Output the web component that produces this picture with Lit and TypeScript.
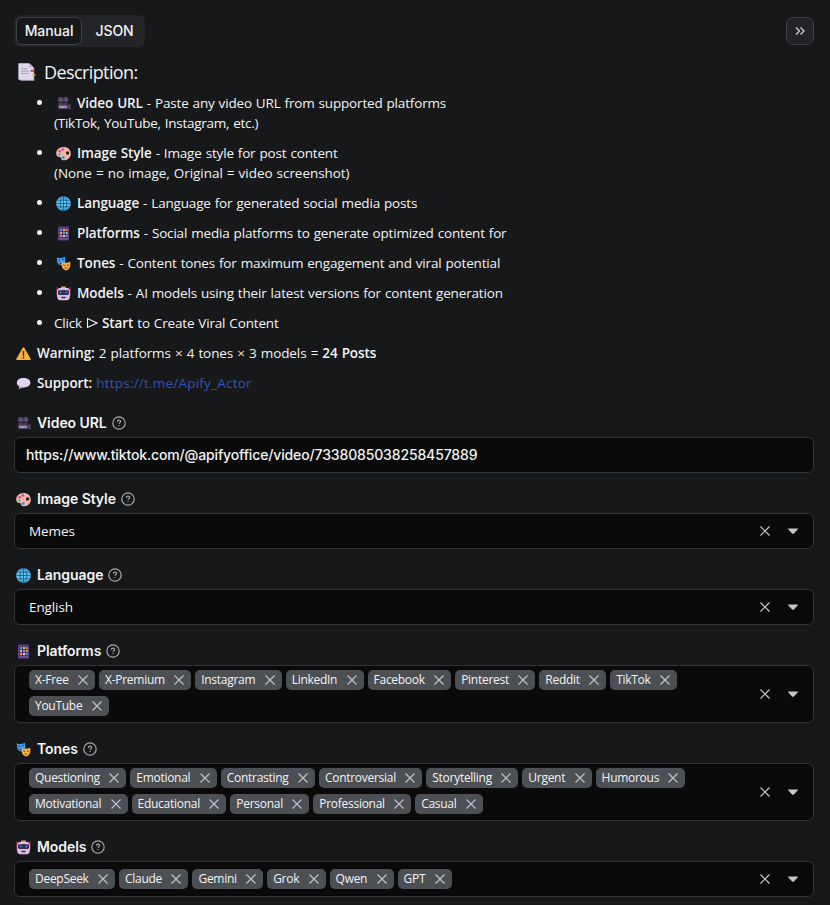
import { LitElement, html, css, svg, nothing } from "lit";
import { customElement, property } from "lit/decorators.js";

const glyphs: Record<string, unknown> = {
  camera: svg`
    <circle cx="4.6" cy="3.7" r="2.9" fill="#4b3a5c"/><circle cx="9.8" cy="3.7" r="2.9" fill="#4b3a5c"/>
    <circle cx="4.6" cy="3.7" r="1.2" fill="#75638a"/><circle cx="9.8" cy="3.7" r="1.2" fill="#75638a"/>
    <path d="M2.3 7h9v6h-9z" fill="#4b3a5c"/><path d="M11.3 9.5l3.2-2v6l-3.2-1.6z" fill="#5d4a6e"/>
    <path d="M0.8 8.6h1.8v3H.8z" fill="#352840"/><path d="M3 9.8h7.6v2.4H3z" fill="#b79fc0"/>
    <path d="M5 9.8v2.4M8.2 9.8v2.4" stroke="#6c567b" stroke-width=".6"/>`,
  palette: svg`
    <path d="M7.6 1C3.3 1 .2 3.9.2 7.4c0 2.3 1.3 3.4 3 3.5 1.4 0 1.9.6 1.9 1.5 0 1.1 1 1.9 2.6 1.9 3.9 0 7.1-2.6 7.1-6.6C14.8 3.7 11.7 1 7.6 1z" fill="#f9b49f"/>
    <circle cx="11.6" cy="7" r="1.7" fill="#2a2023"/>
    <circle cx="6.8" cy="3.4" r="1.4" fill="#c352e0"/><circle cx="3.7" cy="5.2" r="1.3" fill="#ea4567"/>
    <circle cx="3.4" cy="8.5" r="1.2" fill="#42b9a6"/><circle cx="7.2" cy="11.6" r="1.5" fill="#3e91e8"/>`,
  globe: svg`
    <circle cx="7.5" cy="7.5" r="7.1" fill="#5cc3f5"/>
    <g fill="none" stroke="#17537c" stroke-width=".8"><circle cx="7.5" cy="7.5" r="6.9" stroke="#46a9e0"/>
    <ellipse cx="7.5" cy="7.5" rx="3.3" ry="6.9"/><path d="M7.5.6v13.8M.7 7.5h13.6M1.7 4.2h11.6M1.7 10.8h11.6"/></g>`,
  phone: svg`
    <rect x="2" y=".5" width="11" height="14" rx="1" fill="#5c3f82"/>
    <rect x="3.5" y="2.5" width="8" height="9.5" fill="#4a3770"/>
    <path d="M4 3h2v2H4zM7 6h2v2H7zM9.8 9h1.7v2H9.8z" fill="#39a6ef"/>
    <path d="M7 3h2v2H7zM4 6h2v2H4zM9.8 6h1.7v2H9.8z" fill="#ffb13f"/>
    <path d="M9.8 3h1.7v2H9.8zM4 9h2v2H4z" fill="#ef8a50"/><path d="M7 9h2v2H7z" fill="#ffd06b"/>
    <path d="M3 13h9" stroke="#7c5c9f"/>`,
  masks: svg`
    <path d="M.8 1.5Q4.9 3 9 .7L9.4 5Q9.4 8.7 6 9.6 1.6 9 1 5z" fill="#3b9bf3"/>
    <path d="M2.3 4.3l1.8-.4M6 3.8l1.6-.5" stroke="#163f72"/><path d="M3.3 6.3q2 1.4 4-.6-.2 2-1.8 2.2T3.3 6.3z" fill="#153c6e"/>
    <path d="M5.7 5.9Q10 7.8 14.3 5.7V9.8Q13.6 13.9 9.9 14.4 6.2 13.6 5.7 9.8z" fill="#f9b13d"/>
    <path d="M7.3 8.8l1.8.6M11 9.4l1.8-.6" stroke="#713a1e"/><path d="M8 12.7q2-3 4 0-2-.8-4 0z" fill="#713a1e"/>`,
  robot: svg`
    <path d="M.9 1v8.5M14.1 1v8.5" stroke="#a52a52" stroke-width="1.1"/>
    <rect x="5" y=".6" width="5" height="2" rx=".7" fill="#f5a33b"/>
    <path d="M3.5 2h8q2 0 2.4 3v5.5q-.2 3.4-3 3.8H4.1q-2.8-.4-3-3.8V5q.4-3 2.4-3z" fill="#d6bfe3"/>
    <path d="M2 4.6q5.5-1.4 11 0v3.3q-.6 1.1-2 1.1H4q-1.4 0-2-1.1z" fill="#3a2c55"/>
    <circle cx="4.7" cy="6.6" r="1" fill="#3189c6"/><circle cx="10.3" cy="6.6" r="1" fill="#3189c6"/>
    <rect x="5.2" y="10.7" width="4.6" height="1.5" rx=".7" fill="#41325b"/>`,
  warning: svg`
    <path d="M7.5 1.2q.5 0 .8.6l6.3 11q.5 1.2-.7 1.2H1.1q-1.2 0-.7-1.2l6.3-11q.3-.6.8-.6z" fill="#fcae46"/>
    <path d="M6.7 5h1.6l-.2 5H6.9z" fill="#3a2d25"/><circle cx="7.5" cy="11.7" r=".9" fill="#3a2d25"/>`,
  bubble: svg`
    <path d="M7.5 2C3.7 2 .8 4 .8 6.7c0 1.7 1.1 3 2.7 3.9L2.7 13l3.5-1.6h1.3c3.9 0 6.9-1.9 6.9-4.7S11.4 2 7.5 2z" fill="#e2d6ee"/>
    <path d="M2 8.2q1.7 2.5 5.5 2.5 4 0 6-2.3-2 3-6 3H6l-3.3 1.6.8-2.4Q2.2 9.6 2 8.2z" fill="#bda5cf"/>`,
  document: svg`
    <path d="M2 1.5h9l2.5 3v10.2H2z" fill="#bcaec9"/><path d="M.3.2h9l3.5 3.3v10.4H.3z" fill="#e0d8ea"/>
    <path d="M9.3.2l3.5 3.3H9.3z" fill="#bbadc8"/>
    <path d="M2.5 4.7h5M2.5 6.7h7M2.5 8.7h6.5" stroke="#a493b3" stroke-width=".8"/>
    <path d="M10.6 5.6h2.6v1.8h-2.6z" fill="#de3e68"/><path d="M12 9.3h2.4v1.6H12z" fill="#f3a52d"/>`,
};

const emoji = (name: string, big = false) =>
  html`<svg class=${big ? "emoji big" : "emoji"} viewBox="0 0 15 15">${glyphs[name]}</svg>`;

const cross = (cls: string) => html`<svg class=${cls} viewBox="0 0 12 12">
  <path d="M1.5 1.5l9 9M10.5 1.5l-9 9" fill="none" stroke="currentColor" stroke-width="1.2"/></svg>`;

const emojiStyles = css`
  svg { display: block; flex: none; }
  .emoji { width: 15px; height: 15px; margin: 0 6px 0 2px; }
  .emoji.big { width: 18px; height: 18px; margin: 0 8px 0 4px; }
`;

@customElement("form-field")
class FormField extends LitElement {
  @property() icon = "";
  @property() label = "";
  @property() value = "";
  @property({ type: Boolean }) plain = false;
  @property({ attribute: false }) tags: string[] = [];

  static styles = [
    emojiStyles,
    css`
      :host { display: block; }
      .label { display: flex; align-items: center; height: 20px; margin-bottom: 4px; font: 600 14px/20px Inter, sans-serif; color: #f2f3f5; }
      .name { letter-spacing: -0.07px; }
      .help { width: 14px; height: 14px; margin-left: 5px; color: #a5a6aa; }
      .box { display: flex; align-items: center; box-sizing: border-box; min-height: 36px; border: 1px solid #333438; border-radius: 6px; background: #0a0a0b; padding-right: 14px; color: #f2f3f5; }
      .input { padding-left: 11px; font: 500 14px/20px Inter, sans-serif; letter-spacing: -0.14px; }
      .value { flex: 1; padding-left: 14px; font: 13.5px/20px "Open Sans", sans-serif; letter-spacing: -0.1px; }
      .chips { flex: 1; display: flex; flex-wrap: wrap; gap: 6px 4px; padding: 4px 60px 6px 14px; }
      .chips.one { padding-top: 5px; padding-bottom: 5px; }
      .chip { display: flex; align-items: center; height: 20px; padding: 0 6px; border-radius: 5px; background: #4c4f54; font: 12px/20px "Open Sans", sans-serif; letter-spacing: -0.28px; white-space: nowrap; }
      .remove { width: 12px; height: 12px; margin-left: 8.4px; color: #bfc1c6; }
      .clear { width: 12px; height: 12px; margin-right: 16px; color: #c6c7cb; }
      .caret { width: 12px; height: 12px; }
    `,
  ];

  render() {
    const multi = this.tags.length > 0;
    return html`
      <div class="label">
        ${emoji(this.icon)}<span class="name">${this.label}</span>
        <svg class="help" viewBox="0 0 14 14" fill="none" stroke="currentColor" stroke-width="1.2">
          <circle cx="7" cy="7" r="6.2"/><path d="M5.4 5.7c0-1 .7-1.500 1.600-1.500s1.600.5 1.600 1.300c0 1.100-1.600 1.200-1.600 2.300M7 8.900v1.100"/>
        </svg>
      </div>
      <div class="box">
        ${multi
          ? html`<div class=${this.tags.length > 6 ? "chips" : "chips one"}>
              ${this.tags.map((t) => html`<span class="chip">${t}${cross("remove")}</span>`)}
            </div>`
          : html`<span class=${this.plain ? "input" : "value"}>${this.value}</span>`}
        ${this.plain
          ? nothing
          : html`${cross("clear")}<svg class="caret" viewBox="0 0 12 12"><path d="M1.3 3.5h9.4q.5.3.1.8L6.9 8.500q-.9.7-1.800 0L1.200 4.300q-.4-.5.1-.8z" fill="#c6c7cb"/></svg>`}
      </div>`;
  }
}

@customElement("app-root")
class AppRoot extends LitElement {
  static styles = [
    emojiStyles,
    css`
      :host { display: block; box-sizing: border-box; height: 905px; overflow: hidden; padding: 15px 16px 0 14px; background: #17181a; color: #f2f3f5; font: 13.5px/20px "Open Sans", sans-serif; letter-spacing: -0.17px; word-spacing: 0.65px; }
      .top { display: flex; justify-content: space-between; align-items: center; height: 32px; }
      .tabs { display: flex; gap: 3px; box-sizing: border-box; width: 131px; height: 32px; padding: 2px 1px 2px 2px; border-radius: 7px; background: #232428; font: 500 14px/26px Inter, sans-serif; letter-spacing: -0.05px; }
      .tab { flex: 1; box-sizing: border-box; height: 28px; text-align: center; border: 1px solid transparent; border-radius: 6px; }
      .tab.active { flex: none; width: 66px; border-color: #414246; background: #17181a; }
      .more { display: grid; place-items: center; box-sizing: border-box; width: 28px; height: 28px; border: 1px solid #3d3e42; border-radius: 7px; background: #222326; }
      .more svg { width: 12px; height: 12px; }
      .heading { display: flex; align-items: center; height: 26px; margin: 12px 0 8px; font-size: 18px; font-weight: 400; letter-spacing: -0.6px; }
      .list { list-style: none; margin: 0; padding: 0 0 0 20px; }
      .item { display: flex; margin-bottom: 10px; }
      .dot { flex: none; width: 5px; height: 5px; margin: 7px 12px 0 3px; border-radius: 50%; background: #f2f3f5; }
      .line { display: flex; align-items: center; height: 20px; white-space: pre; }
      .extra { letter-spacing: -0.05px; }
      .tight { letter-spacing: -0.26px; }
      b { font-weight: 600; letter-spacing: -0.1px; }
      .play { width: 12px; height: 12px; margin: 0 4px; }
      .note { display: flex; align-items: center; height: 20px; margin: 0 0 10px; white-space: pre; letter-spacing: -0.08px; }
      .link { color: #2b57bd; font-weight: 500; letter-spacing: 0.22px; }
      .fields { display: flex; flex-direction: column; gap: 16px; margin-top: 20px; word-spacing: 0; }
    `,
  ];

  private items = [
    { icon: "camera", name: "Video URL", text: "Paste any video URL from supported platforms", extra: "(TikTok, YouTube, Instagram, etc.)", tight: true },
    { icon: "palette", name: "Image Style", text: "Image style for post content", extra: "(None = no image, Original = video screenshot)" },
    { icon: "globe", name: "Language", text: "Language for generated social media posts" },
    { icon: "phone", name: "Platforms", text: "Social media platforms to generate optimized content for" },
    { icon: "masks", name: "Tones", text: "Content tones for maximum engagement and viral potential" },
    { icon: "robot", name: "Models", text: "AI models using their latest versions for content generation" },
  ];

  private platforms = ["X-Free", "X-Premium", "Instagram", "LinkedIn", "Facebook", "Pinterest", "Reddit", "TikTok", "YouTube"];
  private tones = ["Questioning", "Emotional", "Contrasting", "Controversial", "Storytelling", "Urgent", "Humorous", "Motivational", "Educational", "Personal", "Professional", "Casual"];
  private models = ["DeepSeek", "Claude", "Gemini", "Grok", "Qwen", "GPT"];

  render() {
    return html`
      <div class="top">
        <div class="tabs"><div class="tab active">Manual</div><div class="tab">JSON</div></div>
        <div class="more"><svg viewBox="0 0 12 12"><path d="M2 2.5l3.5 3.5L2 9.5M6.500 2.500L10 6 6.500 9.500" fill="none" stroke="#c9cacd" stroke-width="1.4"/></svg></div>
      </div>
      <div class="heading">${emoji("document", true)}Description:</div>
      <ul class="list">
        ${this.items.map((i) => html`<li class="item"><span class="dot"></span><div>
          <div class="line">${emoji(i.icon)}<span><b>${i.name}</b> - ${i.text}</span></div>
          ${i.extra ? html`<div class=${i.tight ? "line tight" : "line extra"}>${i.extra}</div>` : nothing}
        </div></li>`)}
        <li class="item"><span class="dot"></span><div class="line">Click<svg class="play" viewBox="0 0 12 12"><path d="M1.500 1.500v9L11 6z" fill="none" stroke="currentColor" stroke-width="1.1"/></svg><span><b>Start</b> to Create Viral Content</span></div></li>
      </ul>
      <div class="note">${emoji("warning")}<span><b>Warning:</b> 2 platforms × 4 tones × 3 models = <b>24 Posts</b></span></div>
      <div class="note">${emoji("bubble")}<span><b>Support:</b> <span class="link">https://t.me/Apify_Actor</span></span></div>
      <div class="fields">
        <form-field icon="camera" label="Video URL" plain value="https://www.tiktok.com/@apifyoffice/video/7338085038258457889"></form-field>
        <form-field icon="palette" label="Image Style" value="Memes"></form-field>
        <form-field icon="globe" label="Language" value="English"></form-field>
        <form-field icon="phone" label="Platforms" .tags=${this.platforms}></form-field>
        <form-field icon="masks" label="Tones" .tags=${this.tones}></form-field>
        <form-field icon="robot" label="Models" .tags=${this.models}></form-field>
      </div>`;
  }
}
